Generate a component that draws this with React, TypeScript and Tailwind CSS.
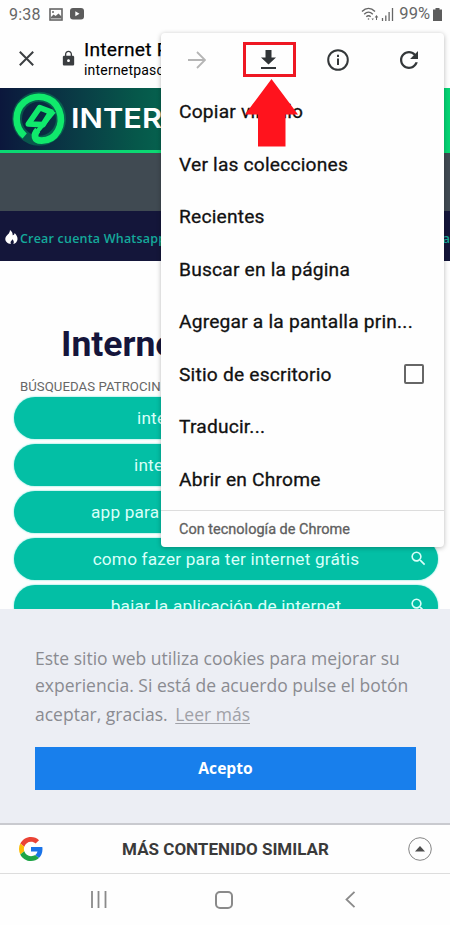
import { MdLock, MdSearch } from "react-icons/md";
import { clsx } from "clsx";

const menuItems = [
  { label: "Copiar vínculo" },
  { label: "Ver las colecciones" },
  { label: "Recientes" },
  { label: "Buscar en la página" },
  { label: "Agregar a la pantalla prin..." },
  { label: "Sitio de escritorio", checkbox: true },
  { label: "Traducir..." },
  { label: "Abrir en Chrome" },
];

const searches = [
  { label: "inte" },
  { label: "inte" },
  { label: "app para" },
  { label: "como fazer para ter internet grátis" },
  { label: "bajar la aplicación de internet" },
];

function StatusBar() {
  return (
    <div className="flex h-7 shrink-0 items-center pl-[9px] pr-2 text-[#666]">
      <span className="w-8 pt-px text-[16px] tracking-[0.2px]">9:38</span>
      <svg className="ml-2 h-[13px] w-[14px]" viewBox="0 0 14 13">
        <rect x="1" y="1" width="12" height="11" fill="none" stroke="#666" strokeWidth="1.6" />
        <path d="M2 10.5V9l2.6-2.5 2 1.6L9.500 5.500l3 3v2z" fill="#666" />
        <circle cx="4" cy="4" r="1" fill="#666" />
      </svg>
      <svg className="ml-[7px] h-[12px] w-[14px]" viewBox="0 0 14 12">
        <rect width="14" height="11.500" rx="3" fill="#5c5c5c" />
        <path d="M5.300 3.300v5L9.500 5.800z" fill="#fff" />
      </svg>
      <div className="ml-auto flex items-center">
        <svg className="h-[15px] w-[18px]" viewBox="0 0 18 15" fill="none" stroke="#666" strokeWidth="1.400">
          <path d="M1 4.500C5 .5 10 .5 14 4.500M3.200 7.200c2.800-2.700 5.800-2.700 8.600 0M5.300 9.800c1.500-1.400 3-1.400 4.400 0" />
          <circle cx="7.500" cy="12" r=".8" fill="#666" stroke="none" />
          <path d="M15.500 13V9.500" strokeWidth="1" />
          <path d="M13.700 10.500l1.800-2.500 1.800 2.500zM10.500 11.500l1.200 1.800 1.200-1.800z" fill="#666" stroke="none" />
        </svg>
        <svg className="ml-[2px] h-[14px] w-[13px]" viewBox="0 0 13 14" stroke="#666" strokeWidth="1.300">
          <path d="M1.500 14v-3M4.800 14V8.500M8.100 14V5" />
          <path d="M11.500 14V1" />
        </svg>
        <span className="ml-[5px] pt-px text-[16.500px]">99%</span>
        <svg className="ml-[3px] h-[13px] w-[9px]" viewBox="0 0 9 13">
          <path d="M2.500 0h4v1.500H9V13H0V1.500h2.500z" fill="#5c5c5c" />
        </svg>
      </div>
    </div>
  );
}

function TabHeader() {
  return (
    <header className="flex h-[60px] shrink-0 items-center pl-[19px]">
      <svg className="h-[15px] w-[15px]" viewBox="0 0 15 15" stroke="#3c3f42" strokeWidth="2">
        <path d="M.8.8l13.400 13.400M14.200.8L.8 14.200" />
      </svg>
      <MdLock className="ml-[26px] h-[17px] w-[17px] text-[#3a3d40]" />
      <div className="ml-[7px] whitespace-nowrap text-black">
        <p className="h-[23px] text-[19.200px] leading-[23px] tracking-[0.25px] [-webkit-text-stroke:0.25px_#000]">Internet P</p>
        <p className="text-[14px] leading-[18px] tracking-[0.2px]">internetpasc</p>
      </div>
    </header>
  );
}

function SiteBanner() {
  return (
    <div className="shrink-0">
      <div className="flex h-[62px] items-center overflow-hidden bg-linear-to-r from-[#0b173c] via-[#06574a] via-30% to-[#05d574]">
        <svg className="ml-2 h-[62px] w-[62px] shrink-0" viewBox="24 24 186 186">
          <circle cx="117" cy="116" r="66" fill="none" stroke="#07b765" strokeOpacity=".35" strokeWidth="30" />
          <g fill="none" stroke="#10e96c" strokeLinejoin="round">
            <path d="M74 168C43 142 41 93 73 66c34-27 86-19 104 24 17 44-8 92-52 92-24 0-25-18-12-32" strokeWidth="20" />
            <path d="M119 83l34 13-24 38-44-2z" strokeWidth="17" />
            <path d="M162 94l-50 60" strokeWidth="13" />
          </g>
        </svg>
        <span className="ml-px inline-block origin-left scale-x-[1.12] font-[Inter] text-[27.500px] font-semibold leading-none text-white">
          INTER
        </span>
      </div>
      <div className="h-[3px] bg-[#0bd873]" />
      <div className="h-[58px] bg-[#404a52]" />
      <div className="flex h-[50px] items-center justify-between overflow-hidden bg-[#14163a] pl-[5px] pt-[6px] font-['Open_Sans'] text-[12.500px] font-semibold text-[#14a99a]">
        <div className="flex items-center whitespace-nowrap">
          <svg className="-mt-[4px] mr-[2px] h-[14px] w-[13px]" viewBox="0 0 13 14">
            <path
              d="M5 0c2 1.500 3 3.500 2.600 5.300C9 5 9.600 4 9.600 3c2 2 3.200 4.300 2.900 6.500-.3 2.200-2 4-4.200 4.500 1-1.700.5-3.300-1-4.700-.3 1.300-1.300 1.700-1.700 2.700-.2.700 0 1.400.3 2C2.500 13.700.2 11.500.3 8.700.4 6 2.600 5 3.800 3.400 4.600 2.400 5 1.300 5 0z"
              fill="#fff"
            />
          </svg>
          <span className="tracking-[0.2px]">Crear cuenta Whatsapp</span>
        </div>
        <span>a</span>
      </div>
    </div>
  );
}

function Results() {
  return (
    <main className="h-[348px] shrink-0 overflow-hidden bg-[#fefefe] pt-[60px]">
      <h1 className="whitespace-nowrap pl-[61px] text-[35.500px] font-bold leading-[46px] text-[#15153b]">Interne</h1>
      <p className="mt-[10px] pl-5 text-[13.200px] leading-5 tracking-[0.05px] text-[#666]">BÚSQUEDAS PATROCIN</p>
      <ul className="ml-[14px] mr-[12px] space-y-[5.500px]">
        {searches.map((search, index) => (
          <li
            key={index}
            className={clsx(
              "relative flex h-[41.500px] items-center whitespace-nowrap rounded-full bg-[#03bfa5] pt-[2px] text-[17.200px] tracking-[0.2px] text-[#d9fff9] shadow-[0_0_2px_#52e0d0]",
              index === 0 && "pl-[123px]",
              index === 1 && "pl-[120px]",
              index === 2 && "pl-[77px]",
              index > 2 && "justify-center"
            )}
          >
            {search.label}
            <MdSearch className="absolute right-[10px] top-[11px] h-[19px] w-[19px]" />
          </li>
        ))}
      </ul>
    </main>
  );
}

function CookieNotice() {
  return (
    <section className="h-[214px] shrink-0 bg-[#eceef4] px-[35px] pt-[36px] font-['Open_Sans'] text-[#8a8b91]">
      <div className="whitespace-nowrap text-[17.500px] leading-[26.500px]">
        <p>Este sitio web utiliza cookies para mejorar su</p>
        <p>experiencia. Si está de acuerdo pulse el botón</p>
        <p className="mt-[3px]">
          aceptar, gracias. <a className="ml-[3px] text-[#a0a1a7] underline underline-offset-2">Leer más</a>
        </p>
      </div>
      <button className="mt-[19.500px] block h-[43px] w-[381px] bg-[#187fec] pt-px text-[15.600px] font-bold text-white">Acepto</button>
    </section>
  );
}

function GoogleLogo() {
  return (
    <svg className="h-6 w-6" viewBox="0 0 48 48">
      <path fill="#EA4335" d="M24 9.500c3.540 0 6.710 1.220 9.210 3.600l6.850-6.850C35.900 2.380 30.470 0 24 0 14.620 0 6.510 5.380 2.560 13.220l7.980 6.190C12.430 13.720 17.740 9.500 24 9.500z" />
      <path fill="#1a73e8" d="M46.980 24.550c0-1.570-.15-3.090-.38-4.550H24v9.020h12.940c-.58 2.960-2.260 5.480-4.780 7.180l7.730 6c4.510-4.180 7.090-10.360 7.090-17.650z" />
      <path fill="#FBBC05" d="M10.530 28.590c-.48-1.450-.76-2.990-.76-4.590s.27-3.140.76-4.590l-7.980-6.190C.92 16.460 0 20.120 0 24c0 3.880.92 7.540 2.560 10.780l7.970-6.190z" />
      <path fill="#1ea446" d="M24 48c6.480 0 11.930-2.130 15.890-5.810l-7.730-6c-2.150 1.450-4.920 2.300-8.160 2.300-6.260 0-11.570-4.220-13.470-9.910l-7.980 6.190C6.510 42.620 14.620 48 24 48z" />
    </svg>
  );
}

function BottomBars() {
  return (
    <footer className="shrink-0">
      <div className="flex h-[51px] items-center justify-between border-b border-[#ddd] border-t-2 border-t-[#c9cacf] bg-[#fefefe] pl-[19px] pr-[18px]">
        <GoogleLogo />
        <span className="pt-px text-[17px] font-bold text-[#3a3a3a]">MÁS CONTENIDO SIMILAR</span>
        <svg className="h-6 w-6" viewBox="0 0 24 24">
          <circle cx="12" cy="12" r="11.300" fill="none" stroke="#777" strokeWidth=".9" />
          <path d="M7 14.500l5-5.500 5 5.500z" fill="#4d4d4d" />
        </svg>
      </div>
      <nav className="flex h-[51px] items-center bg-[#fefefe] pl-[90px]">
        <svg className="h-[17px] w-[17px]" viewBox="0 0 17 17" stroke="#8a8a8a" strokeWidth="1.800">
          <path d="M2 0v17M8.500 0v17M15.500 0v17" />
        </svg>
        <div className="ml-[108px] h-[18px] w-[18px] rounded-[5px] border-2 border-[#8a8a8a]" />
        <svg className="ml-[112px] h-[17px] w-[11px]" viewBox="0 0 11 17" fill="none" stroke="#8a8a8a" strokeWidth="1.800">
          <path d="M9.500.8L1.500 8.500l8 7.700" />
        </svg>
      </nav>
    </footer>
  );
}

function ChromeMenu() {
  return (
    <div className="absolute left-[161px] top-[33px] h-[514px] w-[283px] rounded-[4px] bg-[#fefefe] shadow-[0_1px_5px_rgba(0,0,0,0.28)]">
      <div className="flex h-[53px] items-center pl-[27px] text-[#333739]">
        <svg className="h-[18px] w-[18px]" viewBox="0 0 18 18" fill="none" stroke="#b5b5b5" strokeWidth="1.800">
          <path d="M0 9h16.500M9 1l8 8-8 8" />
        </svg>
        <div className="ml-[37px] flex h-[35px] w-[53px] items-center justify-center border-[3px] border-[#ee1823]">
          <svg className="-ml-[3px] h-[19px] w-[15px]" viewBox="0 0 15 19" fill="#303437">
            <path d="M4.500 0h6v7.500H15L7.500 14.500 0 7.500h4.500zM0 17h15v2H0z" />
          </svg>
        </div>
        <svg className="ml-[31px] h-[22px] w-[22px]" viewBox="0 0 22 22" fill="none" stroke="currentColor" strokeWidth="2">
          <circle cx="11" cy="11" r="9.800" />
          <path d="M11 9.500V16M11 5.800V8" />
        </svg>
        <svg className="ml-[51px] h-[18px] w-[18px]" viewBox="4 4 16 16" fill="currentColor">
          <path d="M17.650 6.350C16.200 4.900 14.210 4 12 4c-4.420 0-7.990 3.580-7.990 8s3.570 8 7.990 8c3.730 0 6.840-2.550 7.730-6h-2.080c-.82 2.330-3.040 4-5.650 4-3.310 0-6-2.690-6-6s2.690-6 6-6c1.660 0 3.140.69 4.220 1.780L13 11h7V4l-2.350 2.350z" />
        </svg>
      </div>
      <ul>
        {menuItems.map((item) => (
          <li
            key={item.label}
            className="flex h-[52.500px] items-center justify-between pl-[18px] pr-[20.500px] pt-px text-[19.200px] tracking-[0.2px] text-[#111] [-webkit-text-stroke:0.3px_#111]"
          >
            {item.label}
            {item.checkbox && <span className="-mt-[2px] h-5 w-5 rounded-[2px] border-2 border-[#666]" />}
          </li>
        ))}
      </ul>
      <div className="mt-[4px] flex h-[37px] items-center border-t border-[#ddd] pl-[18px] pt-px text-[14.500px] text-[#606060] [-webkit-text-stroke:0.3px_#606060]">
        Con tecnología de Chrome
      </div>
      {/* red pointer under the download button */}
      <svg className="absolute left-[84px] top-[46px] h-[68px] w-[53px]" viewBox="0 0 53 68">
        <path d="M26.500 0L53 35.500H40.500V67.500H13V35.500H0z" fill="#ff131d" />
      </svg>
    </div>
  );
}

export default function App() {
  return (
    <div className="relative flex h-[925px] w-[450px] flex-col overflow-hidden bg-[#fefefe] font-[Roboto,sans-serif]">
      <StatusBar />
      <TabHeader />
      <SiteBanner />
      <Results />
      <CookieNotice />
      <BottomBars />
      <ChromeMenu />
    </div>
  );
}
